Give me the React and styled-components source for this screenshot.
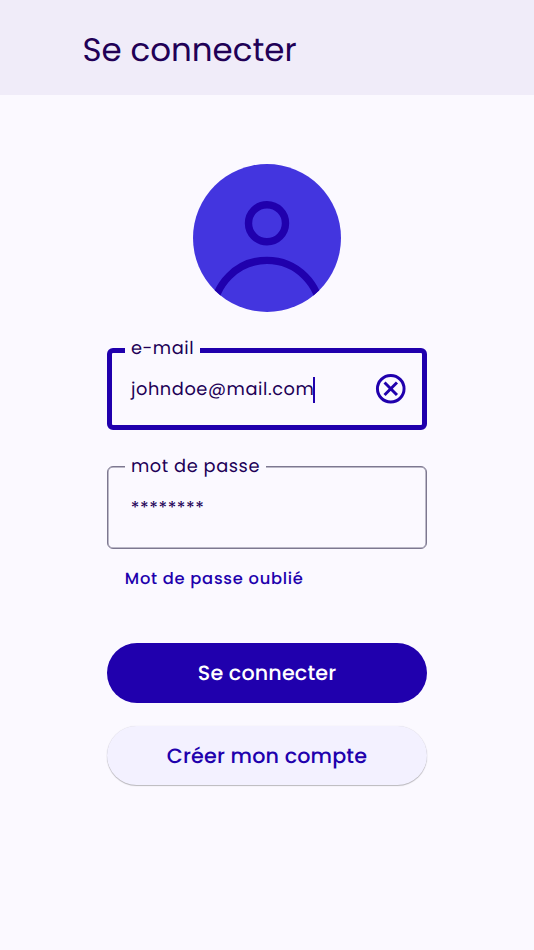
import React from "react";
import styled, { createGlobalStyle } from "styled-components";

const GlobalStyle = createGlobalStyle`
  * {
    box-sizing: border-box;
  }
  body {
    margin: 0;
    background-color: #fbf9ff;
    color: #210056;
    font-family: Poppins, Inter, sans-serif;
    text-rendering: geometricPrecision;
  }
`;

const Page = styled.div`
  min-height: 950px;
`;

const Header = styled.header`
  height: 94.7px;
  padding: 27px 0 0 82.5px;
  background-color: #f0ecf9;
`;

const Title = styled.h1`
  margin: 0;
  font-size: 32.5px;
  font-weight: 400;
  line-height: 48px;
  white-space: nowrap;
`;

const Form = styled.main`
  display: flex;
  flex-direction: column;
  width: 319.4px;
  margin: 0 auto;
  padding-top: 69.3px;
`;

const Avatar = styled.svg`
  align-self: center;
  width: 148px;
  height: 148px;
  margin-bottom: 35.6px;
`;

const Field = styled.div`
  position: relative;
  display: flex;
  align-items: center;
  justify-content: space-between;
  height: ${(props) => (props.$active ? "82.7px" : "83.2px")};
  margin-bottom: 35.3px;
  padding: ${(props) => (props.$active ? "0 13.5px 0 18.7px" : "2px 16.5px 0 22.5px")};
  border: ${(props) => (props.$active ? "5px solid #2000ad" : "1px solid #7d7890")};
  box-shadow: ${(props) => (props.$active ? "none" : "inset 0 0 0 0.5px #7d7890")};
  border-radius: 6px;
`;

const Label = styled.label`
  position: absolute;
  top: ${(props) => (props.$active ? "-18px" : "-14px")};
  left: ${(props) => (props.$active ? "13px" : "17px")};
  width: ${(props) => props.$width};
  padding-left: 5.6px;
  background-color: #fbf9ff;
  font-size: 17.8px;
  line-height: 27px;
  letter-spacing: 0.57px;
  white-space: nowrap;
`;

const Value = styled.span`
  display: flex;
  align-items: center;
  padding-top: ${(props) => (props.$active ? "2px" : "1px")};
  font-size: 17.8px;
  line-height: 26px;
  letter-spacing: 0.57px;
`;

const Caret = styled.span`
  width: 1.5px;
  height: 26px;
  margin-left: -1px;
  background-color: #2000ad;
`;

const ClearIcon = styled.svg`
  width: 35.5px;
  height: 35.5px;
`;

const ForgotLink = styled.a`
  margin: -18.2px 0 51.5px 17.5px;
  color: #2000ad;
  font-size: 16.3px;
  font-weight: 500;
  line-height: 26px;
  letter-spacing: 0.74px;
`;

const Button = styled.button`
  height: 59.2px;
  margin-bottom: 23.7px;
  padding: 1px 0 0;
  border: 0;
  border-radius: 30px;
  background-color: ${(props) => (props.$primary ? "#2000ad" : "#f3f1ff")};
  box-shadow: ${(props) => (props.$primary ? "none" : "0 1px 1px rgba(0, 0, 0, 0.25), 0 0 1px rgba(0, 0, 0, 0.15)")};
  color: ${(props) => (props.$primary ? "#fff" : "#2000ad")};
  font-family: inherit;
  font-size: 20.7px;
  font-weight: 500;
  letter-spacing: 0.15px;
  text-rendering: inherit;
`;

function App() {
  return (
    <Page>
      <GlobalStyle />
      <Header>
        <Title>Se connecter</Title>
      </Header>
      <Form>
        <Avatar viewBox="0 0 100 100">
          <clipPath id="disc">
            <circle cx="50" cy="50" r="50" />
          </clipPath>
          <circle cx="50" cy="50" r="50" fill="#4335df" />
          <g clipPath="url(#disc)" fill="none" stroke="#2000ad" strokeWidth="5">
            <circle cx="50" cy="40" r="12.5" />
            <circle cx="50" cy="101.3" r="36.2" />
          </g>
        </Avatar>
        <Field $active>
          <Label $active $width="75px">e-mail</Label>
          <Value $active>
            johndoe@mail.com
            <Caret />
          </Value>
          <ClearIcon viewBox="0 0 24 24" fill="none" stroke="#2000ad">
            <circle cx="12" cy="12" r="9" strokeWidth="2" />
            <path d="M7.8 7.8L16.2 16.2M16.2 7.8L7.8 16.2" strokeWidth="2" />
          </ClearIcon>
        </Field>
        <Field>
          <Label $width="140.5px">mot de passe</Label>
          <Value>********</Value>
        </Field>
        <ForgotLink>Mot de passe oublié</ForgotLink>
        <Button $primary>Se connecter</Button>
        <Button>Créer mon compte</Button>
      </Form>
    </Page>
  );
}

export default App;
